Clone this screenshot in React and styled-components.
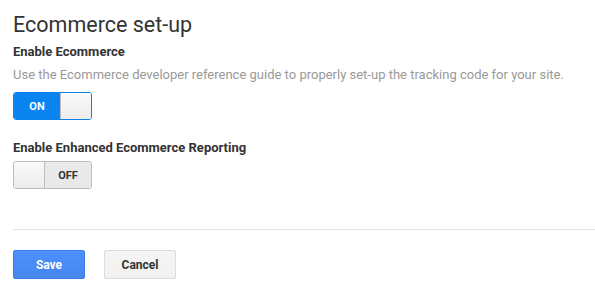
import React from "react";
import styled, { createGlobalStyle } from "styled-components";

const Global = createGlobalStyle`
  html, body { margin: 0; padding: 0; background: #fff; }
  body { font-family: Roboto, "Liberation Sans", Arial, sans-serif; color: #333; }
`;

const Page = styled.div`
  width: 595px;
  height: 303px;
  box-sizing: border-box;
  padding: 12px 0 0 13px;
  display: flex;
  flex-direction: column;
`;

const Title = styled.h1`
  margin: 0;
  font-size: 21.5px;
  font-weight: 400;
  line-height: 26px;
  color: #333;
`;

const Label = styled.div`
  margin-top: ${(p) => p.$mt}px;
  font-size: 13px;
  font-weight: 700;
  line-height: 16px;
  color: #333;
`;

const Hint = styled.div`
  margin-top: 7px;
  font-size: 13px;
  line-height: 16px;
  color: #999;
`;

const Toggle = styled.div`
  margin-top: ${(p) => p.$mt}px;
  width: 79px;
  height: 28px;
  box-sizing: border-box;
  display: flex;
  border: 1px solid ${(p) => (p.$on ? "#0f80ea" : "#bdbdbd")};
  border-radius: 3px;
  overflow: hidden;
`;

const State = styled.div`
  flex: 1;
  display: flex;
  align-items: center;
  justify-content: center;
  font-size: 11px;
  font-weight: 700;
  color: ${(p) => (p.$on ? "#fff" : "#333")};
  background: ${(p) => (p.$on ? "#0a84f0" : "#e9e9e9")};
`;

const Knob = styled.div`
  width: 31px;
  flex: none;
  box-sizing: border-box;
  background: linear-gradient(#fafafa, #ececec);
  border-${(p) => (p.$side === "right" ? "left" : "right")}: 1px solid #bdbdbd;
`;

const Rule = styled.hr`
  margin: 40px 0 0 0;
  border: 0;
  border-top: 1px solid #e3e3e3;
  height: 0;
`;

const Actions = styled.div`
  display: flex;
  gap: 19px;
  margin-top: 20px;
`;

const Button = styled.button`
  width: 72px;
  height: 29px;
  box-sizing: border-box;
  border-radius: 2px;
  font-family: Roboto, "Liberation Sans", Arial, sans-serif;
  font-size: 12px;
  font-weight: 700;
  padding: 0;
  border: 1px solid ${(p) => (p.$primary ? "#3b7ee8" : "#dcdcdc")};
  color: ${(p) => (p.$primary ? "#fff" : "#333")};
  background: ${(p) =>
    p.$primary ? "linear-gradient(#4d90fe, #4787ed)" : "linear-gradient(#f5f5f5, #f1f1f1)"};
`;

export default function App() {
  return (
    <>
      <Global />
      <Page>
        <Title>Ecommerce set-up</Title>
        <Label $mt={6}>Enable Ecommerce</Label>
        <Hint>Use the Ecommerce developer reference guide to properly set-up the tracking code for your site.</Hint>
        <Toggle $on $mt={9}>
          <State $on>ON</State>
          <Knob $side="right" />
        </Toggle>
        <Label $mt={20}>Enable Enhanced Ecommerce Reporting</Label>
        <Toggle $mt={5}>
          <Knob $side="left" />
          <State>OFF</State>
        </Toggle>
        <Rule />
        <Actions>
          <Button $primary>Save</Button>
          <Button>Cancel</Button>
        </Actions>
      </Page>
    </>
  );
}
